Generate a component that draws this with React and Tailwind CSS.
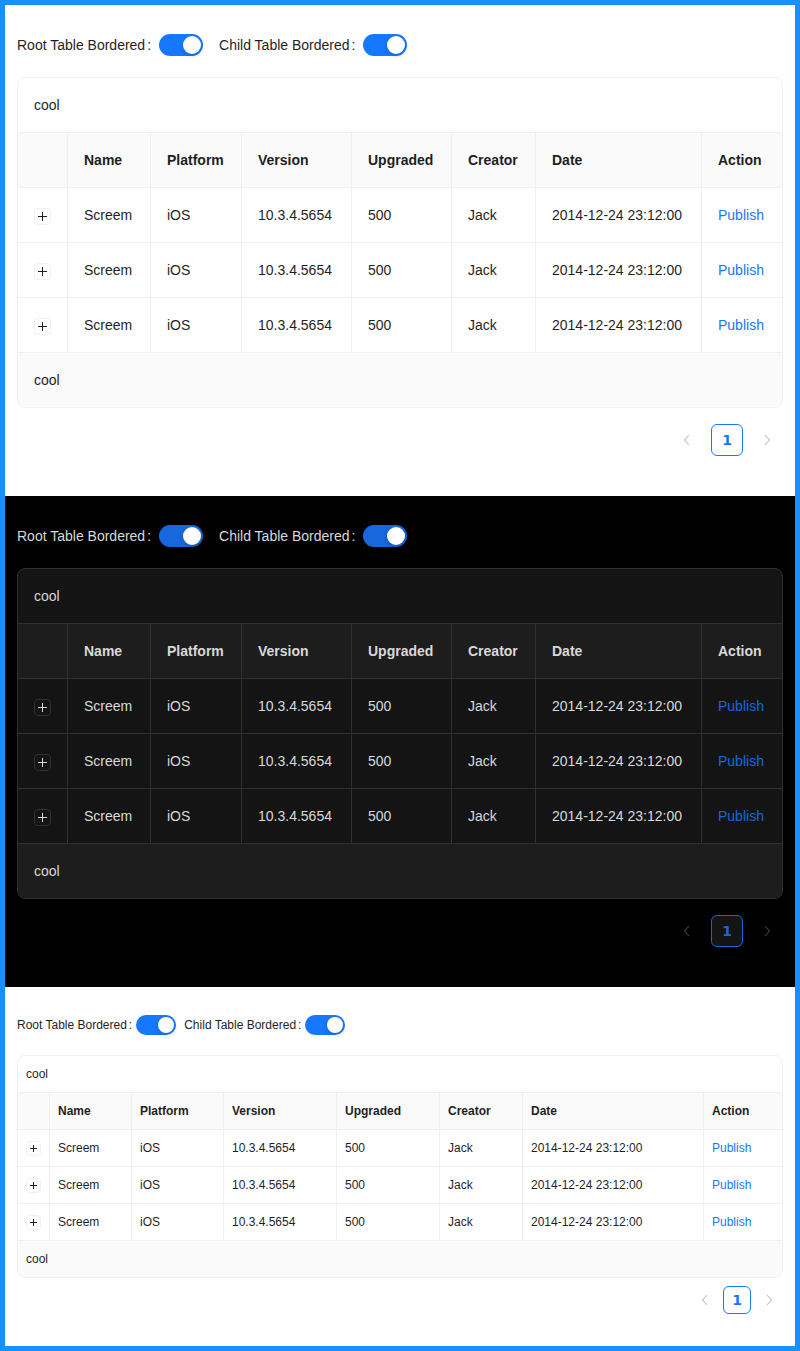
import React from "react";

const columns = ["Name", "Platform", "Version", "Upgraded", "Creator", "Date", "Action"];

const row = ["Screem", "iOS", "10.3.4.5654", "500", "Jack", "2014-12-24 23:12:00"];

const themes = {
  light: {
    bg: "bg-white",
    text: "text-[#1f1f1f]",
    label: "text-sm leading-[22px]",
    rowH: "h-8",
    colonGap: "mr-2",
    itemGap: "ml-4",
    sw: "h-[22px] w-[44px] bg-[#1677ff]",
    knob: "h-[18px] w-[18px]",
    border: "border-[#f0f0f0]",
    tableBg: "bg-white",
    headBg: "bg-[#fafafa]",
    footBg: "bg-[#fafafa]",
    cell: "px-4 py-4 text-sm leading-[22px]",
    link: "text-[#1677ff]",
    expand: "h-[17px] w-[17px] border-[#f0f0f0] bg-white text-[#1f1f1f]",
    plus: 9,
    cols: ["w-[50px]", "w-[83px]", "w-[91px]", "w-[110px]", "w-[100px]", "w-[84px]", "w-[166px]", "w-[80px]"],
    top: "pt-6",
    gapAfterRow: "mb-4",
    pager: "mt-4 mb-4 gap-2",
    pageBtn: "h-8 w-8",
    pageItem: "h-8 w-8 border-[#1677ff] text-[#1677ff] bg-white text-sm",
    arrow: "text-[#bfbfbf]",
    bottom: "pb-6",
  },
  dark: {
    bg: "bg-black",
    text: "text-[#d9d9d9]",
    label: "text-sm leading-[22px]",
    rowH: "h-8",
    colonGap: "mr-2",
    itemGap: "ml-4",
    sw: "h-[22px] w-[44px] bg-[#1668dc]",
    knob: "h-[18px] w-[18px]",
    border: "border-[#303030]",
    tableBg: "bg-[#141414]",
    headBg: "bg-[#1d1d1d]",
    footBg: "bg-[#1d1d1d]",
    cell: "px-4 py-4 text-sm leading-[22px]",
    link: "text-[#1668dc]",
    expand: "h-[17px] w-[17px] border-[#303030] bg-[#141414] text-[#d9d9d9]",
    plus: 9,
    cols: ["w-[50px]", "w-[83px]", "w-[91px]", "w-[110px]", "w-[100px]", "w-[84px]", "w-[166px]", "w-[80px]"],
    top: "pt-6",
    gapAfterRow: "mb-4",
    pager: "mt-4 mb-4 gap-2",
    pageBtn: "h-8 w-8",
    pageItem: "h-8 w-8 border-[#1668dc] text-[#1668dc] bg-[#141414] text-sm",
    arrow: "text-[#424242]",
    bottom: "pb-6",
  },
  small: {
    bg: "bg-white",
    text: "text-[#1f1f1f]",
    label: "text-xs leading-5",
    rowH: "h-7",
    colonGap: "mr-1",
    itemGap: "ml-2",
    sw: "h-5 w-10 bg-[#1677ff]",
    knob: "h-4 w-4",
    border: "border-[#f0f0f0]",
    tableBg: "bg-white",
    headBg: "bg-[#fafafa]",
    footBg: "bg-[#fafafa]",
    cell: "px-2 py-2 text-xs leading-5",
    link: "text-[#1677ff]",
    expand: "h-[15px] w-[15px] border-[#f0f0f0] bg-white text-[#1f1f1f]",
    plus: 7,
    cols: ["w-[32px]", "w-[82px]", "w-[92px]", "w-[113px]", "w-[103px]", "w-[83px]", "w-[181px]", "w-[78px]"],
    top: "pt-6",
    gapAfterRow: "mb-4",
    pager: "mt-2 mb-2 gap-1",
    pageBtn: "h-7 w-7",
    pageItem: "h-7 w-7 border-[#1677ff] text-[#1677ff] bg-white text-sm",
    arrow: "text-[#bfbfbf]",
    bottom: "pb-6",
  },
};

function Switch({ t }) {
  return (
    <span className={`relative inline-flex items-center justify-end rounded-full p-[2px] ${t.sw}`}>
      <span className={`rounded-full bg-white shadow-[0_2px_4px_rgba(0,35,11,0.2)] ${t.knob}`} />
    </span>
  );
}

function Field({ t, label, first }) {
  return (
    <div className={`flex items-center ${first ? "" : t.itemGap}`}>
      <span className={`${t.label} ${t.text}`}>{label}</span>
      <span className={`ml-0.5 ${t.colonGap} ${t.label} ${t.text}`}>:</span>
      <Switch t={t} />
    </div>
  );
}

function ExpandIcon({ t }) {
  const s = t.plus;
  const h = s / 2;
  return (
    <span className={`inline-flex items-center justify-center rounded border align-middle ${t.expand}`}>
      <svg width={s} height={s} viewBox={`0 0 ${s} ${s}`}>
        <path d={`M0 ${h}H${s}M${h} 0V${s}`} stroke="currentColor" strokeWidth="1" />
      </svg>
    </span>
  );
}

function Chevron({ dir, className }) {
  return (
    <svg width="8" height="12" viewBox="0 0 8 12" className={className}>
      {dir === "left" ? (
        <path d="M6 1L1.5 6L6 11" fill="none" stroke="currentColor" strokeWidth="1.1" />
      ) : (
        <path d="M2 1L6.5 6L2 11" fill="none" stroke="currentColor" strokeWidth="1.1" />
      )}
    </svg>
  );
}

function Section({ variant }) {
  const t = themes[variant];
  const cellBase = `border-b border-r last:border-r-0 ${t.border} ${t.cell} text-left`;

  return (
    <div className={`px-3 ${t.top} ${t.bottom} ${t.bg}`}>
      <div className={`flex items-center ${t.rowH} ${t.gapAfterRow}`}>
        <Field t={t} label="Root Table Bordered" first />
        <Field t={t} label="Child Table Bordered" />
      </div>

      <div className={`overflow-hidden rounded-lg border ${t.border} ${t.tableBg} ${t.text}`}>
        <div className={`border-b ${t.border} ${t.cell}`}>cool</div>
        <table className="w-full table-fixed border-separate border-spacing-0">
          <colgroup>
            {t.cols.map((c, i) => (
              <col key={i} className={c} />
            ))}
          </colgroup>
          <thead>
            <tr className={t.headBg}>
              <th className={cellBase} />
              {columns.map((c) => (
                <th key={c} className={`${cellBase} font-semibold`}>
                  {c}
                </th>
              ))}
            </tr>
          </thead>
          <tbody>
            {[0, 1, 2].map((r) => (
              <tr key={r}>
                <td className={`${cellBase} text-center`}>
                  <ExpandIcon t={t} />
                </td>
                {row.map((v, i) => (
                  <td key={i} className={`${cellBase} whitespace-nowrap`}>
                    {v}
                  </td>
                ))}
                <td className={cellBase}>
                  <span className={t.link}>Publish</span>
                </td>
              </tr>
            ))}
          </tbody>
        </table>
        <div className={`${t.footBg} ${t.cell}`}>cool</div>
      </div>

      <div className={`flex items-center justify-end ${t.pager}`}>
        <span className={`flex items-center justify-center ${t.pageBtn} ${t.arrow}`}>
          <Chevron dir="left" />
        </span>
        <span
          className={`flex items-center justify-center rounded-md border font-semibold ${t.pageItem}`}
          style={{ fontFamily: '"DejaVu Sans", sans-serif' }}
        >
          1
        </span>
        <span className={`flex items-center justify-center ${t.pageBtn} ${t.arrow}`}>
          <Chevron dir="right" />
        </span>
      </div>
    </div>
  );
}

export default function App() {
  return (
    <div className="border-[5px] border-[#1890ff] font-['Liberation_Sans',Arial,sans-serif]">
      <Section variant="light" />
      <Section variant="dark" />
      <Section variant="small" />
    </div>
  );
}
